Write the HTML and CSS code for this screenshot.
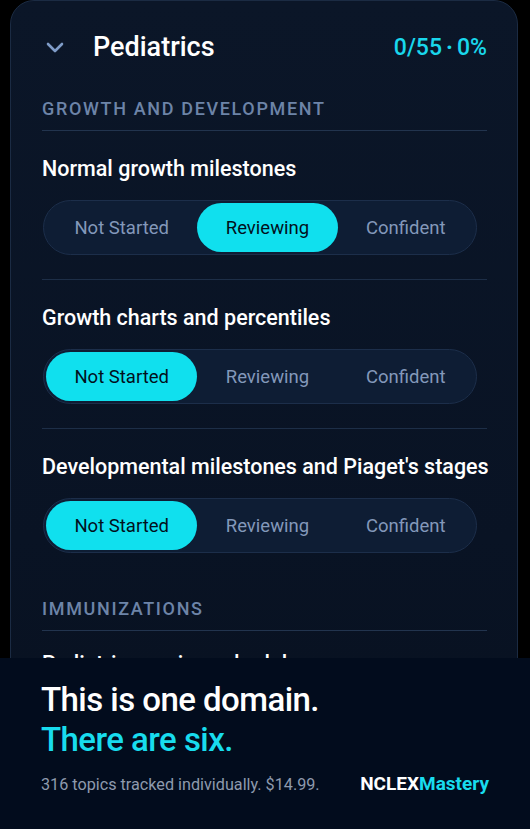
FILE: index.html
```html
<!DOCTYPE html>
<html lang="en">
<head>
<meta charset="utf-8">
<title>Pediatrics</title>
<link rel="stylesheet" href="styles.css">
</head>
<body>
<div class="screen">
  <section class="card">
    <header class="card-head">
      <svg class="chev" width="18" height="11" viewBox="0 0 18 11"><path d="M2 2 L9 9 L16 2" fill="none" stroke="#7f9cc8" stroke-width="2.6" stroke-linecap="round" stroke-linejoin="round"/></svg>
      <h1 class="title">Pediatrics</h1>
      <div class="progress">0/55<span class="dot">·</span>0%</div>
    </header>

    <h2 class="section">GROWTH AND DEVELOPMENT</h2>

    <div class="topic">
      <h3 class="topic-title">Normal growth milestones</h3>
      <div class="seg">
        <span class="opt">Not Started</span>
        <span class="opt active">Reviewing</span>
        <span class="opt">Confident</span>
      </div>
    </div>

    <div class="topic">
      <h3 class="topic-title">Growth charts and percentiles</h3>
      <div class="seg">
        <span class="opt active">Not Started</span>
        <span class="opt">Reviewing</span>
        <span class="opt">Confident</span>
      </div>
    </div>

    <div class="topic last">
      <h3 class="topic-title">Developmental milestones and Piaget's stages</h3>
      <div class="seg">
        <span class="opt active">Not Started</span>
        <span class="opt">Reviewing</span>
        <span class="opt">Confident</span>
      </div>
    </div>

    <h2 class="section">IMMUNIZATIONS</h2>

    <div class="topic next">
      <h3 class="topic-title">Pediatric vaccine schedules</h3>
    </div>
  </section>

  <footer class="promo">
    <p class="line1">This is one domain.</p>
    <p class="line2">There are six.</p>
    <div class="promo-foot">
      <span class="sub">316 topics tracked individually. $14.99.</span>
      <span class="brand">NCLEX<span class="brand-accent">Mastery</span></span>
    </div>
  </footer>
</div>
</body>
</html>
```

FILE: styles.css
```css
* { box-sizing: border-box; }
html, body {
  margin: 0;
  padding: 0;
  background: #000;
}
body {
  font-family: Roboto, "Noto Sans", sans-serif;
  color: #fff;
}
.screen {
  position: relative;
  width: 530px;
  height: 829px;
  overflow: hidden;
  background: #000;
}
.card {
  margin-left: 10px;
  width: 508px;
  height: 900px;
  border: 1px solid #1b2b43;
  border-radius: 24px;
  background: linear-gradient(180deg, #0b1628 0%, #091324 60%, #07101e 100%);
  padding: 0 30px 0 31px;
}
.card-head {
  display: flex;
  align-items: center;
  height: 40px;
  margin-top: 26px;
}
.chev {
  margin-left: 4px;
  flex: none;
}
.title {
  margin: 0 0 0 29px;
  font-size: 27px;
  font-weight: 500;
  flex: 1;
}
.progress {
  color: #19d7ec;
  font-size: 23px;
  font-weight: 500;
  margin-right: 0;
}
.dot { margin: 0 4px; font-weight: 700; }
.section {
  margin: 31px 0 0;
  padding-bottom: 11px;
  border-bottom: 1px solid #22344e;
  color: #6d84a8;
  font-size: 18px;
  font-weight: 500;
  letter-spacing: 1.65px;
}
.topic {
  padding: 25px 0 24px;
  border-bottom: 1px solid #1d2e47;
}
.topic.last {
  border-bottom: none;
  padding-bottom: 14px;
}
.topic.next {
  padding-top: 20px;
  border-bottom: none;
}
.topic-title {
  margin: 0 0 19px 0;
  font-size: 21.5px;
  font-weight: 500;
  white-space: nowrap;
}
.seg {
  display: flex;
  height: 55px;
  margin-left: 1px;
  margin-right: 10px;
  padding: 2px;
  border: 1px solid #1c2e4a;
  border-radius: 28px;
  background: #0e1d34;
}
.opt {
  flex: 1 1 auto;
  display: flex;
  align-items: center;
  justify-content: center;
  border-radius: 25px;
  color: #8398ba;
  font-size: 18.5px;
  font-weight: 400;
}
.opt.active {
  background: #10e0ee;
  color: #02101c;
}
.promo {
  position: absolute;
  left: 0;
  right: 0;
  top: 658px;
  bottom: 0;
  background: #020c1d;
  padding: 22px 41px 0 41px;
}
.line1, .line2 {
  margin: 0;
  font-size: 33px;
  font-weight: 500;
  line-height: 40px;
  letter-spacing: -0.55px;
}
.line2 { color: #18dcee; }
.promo-foot {
  display: flex;
  justify-content: space-between;
  align-items: baseline;
  margin-top: 12px;
}
.sub {
  color: #8e9aad;
  font-size: 16.2px;
}
.brand {
  font-size: 19px;
  font-weight: 700;
  color: #fff;
}
.brand-accent { color: #18dcee; }
```
